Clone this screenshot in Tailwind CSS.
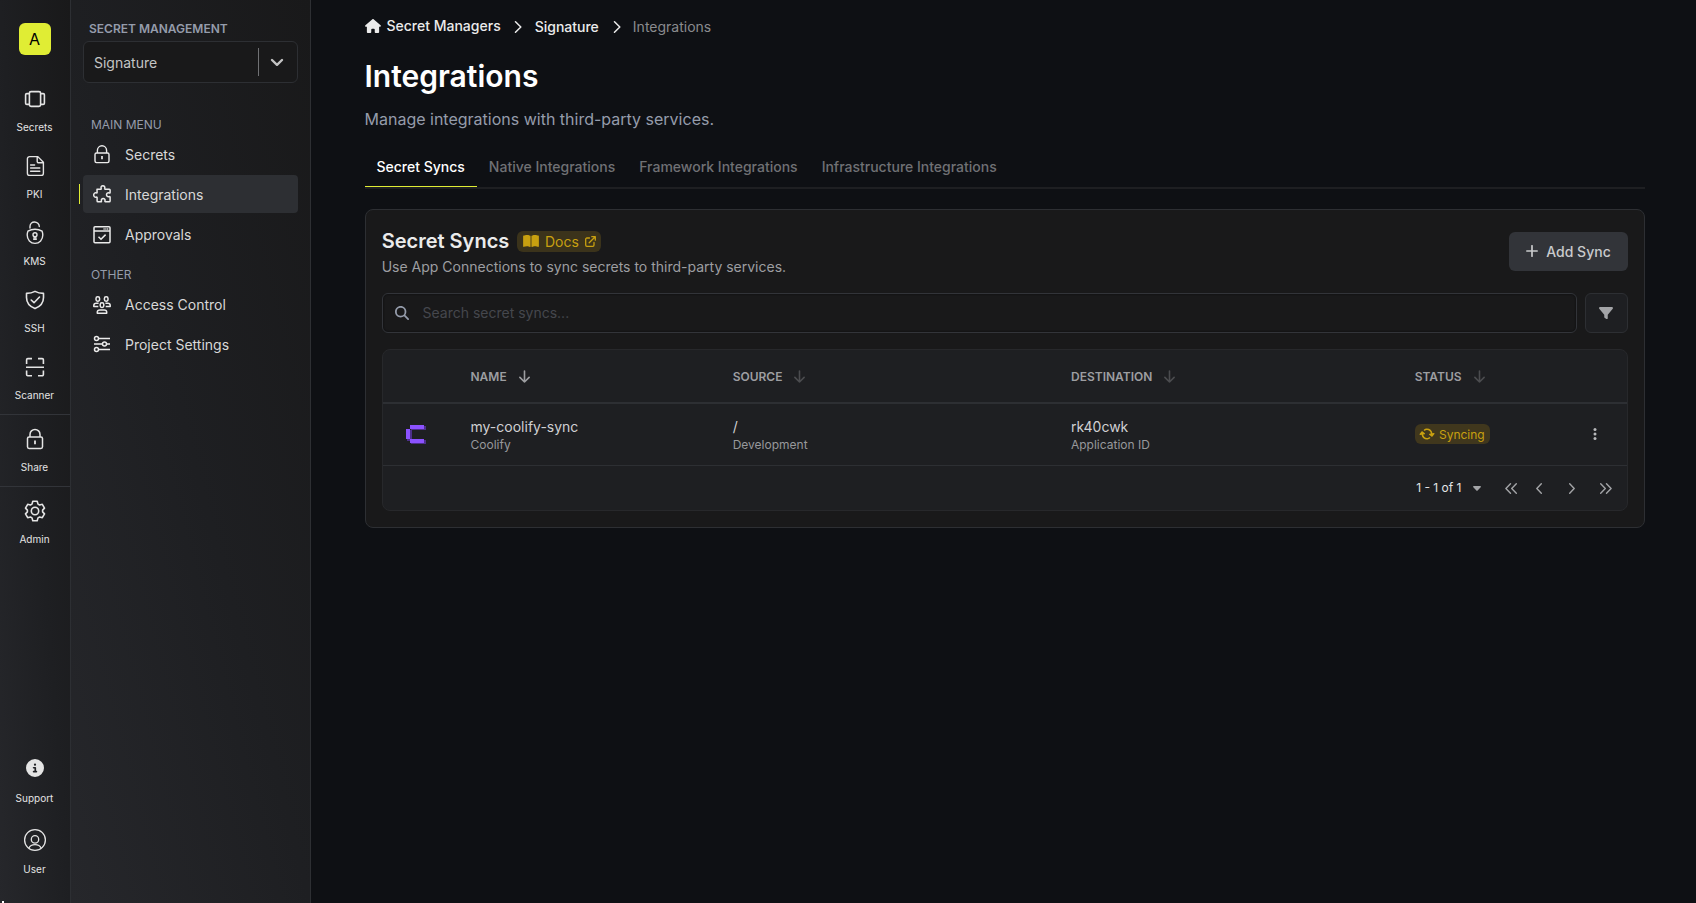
<!DOCTYPE html>
<html lang="en">
<head>
<meta charset="utf-8">
<title>Integrations</title>
<script src="https://cdn.jsdelivr.net/npm/@tailwindcss/browser@4"></script>
</head>
<body class="flex h-screen overflow-hidden bg-[#0e1014] font-['Inter',sans-serif] text-sm text-[#d8d8d8]">

<!-- Product rail -->
<aside class="relative flex h-full w-[71px] shrink-0 flex-col border-r border-[#2d2f33] bg-linear-to-tr from-[#26272b] via-[#1e1f22] to-[#19191a] text-center text-[10px] leading-[15px] text-[#e4e4e4]">
  <span class="absolute bottom-0 left-0.5 h-0.5 w-0.5 bg-white"></span>
  <div class="h-[79px] shrink-0 pt-[23px]">
    <div class="mx-auto flex size-8 items-center justify-center rounded-md bg-[#e0ed34] pr-px text-base text-black">A</div>
  </div>
  <div class="flex h-[67px] shrink-0 flex-col items-center gap-[9px] pt-2">
    <svg class="size-6" viewBox="0 0 24 24" fill="none" stroke="currentColor" stroke-width="1.600"><rect x="6.400" y="4.600" width="11.200" height="14.800" rx="1.600"/><path d="M6.400 6.600H3.800A1.200 1.200 0 0 0 2.600 7.800v8.400a1.200 1.200 0 0 0 1.200 1.200h2.600M17.600 6.600h2.600a1.200 1.200 0 0 1 1.200 1.200v8.400a1.200 1.200 0 0 1-1.200 1.200h-2.600"/></svg>
    <span class="pr-px">Secrets</span>
  </div>
  <div class="flex h-[67px] shrink-0 flex-col items-center gap-[9px] pt-2">
    <svg class="size-6" viewBox="0 0 24 24" fill="none" stroke="currentColor" stroke-width="1.400" stroke-linecap="round"><path d="M6.600 2.600h8.200l5.600 5.600v11a2.200 2.200 0 0 1-2.200 2.200H6.600a2.200 2.200 0 0 1-2.200-2.200V4.800a2.200 2.200 0 0 1 2.200-2.200zM14.200 2.800v4.600a1.400 1.400 0 0 0 1.400 1.400h4.600M7.600 11h4M7.600 14h9.200M7.600 17.200h9.200"/></svg>
    <span class="pr-px">PKI</span>
  </div>
  <div class="flex h-[67px] shrink-0 flex-col items-center gap-[9px] pt-2">
    <svg class="size-6" viewBox="0 0 24 24" fill="none" stroke="currentColor" stroke-width="1.400" stroke-linecap="round"><path d="M12 8.200c-2.600 0-5 .7-7.100 2-.5 1.300-.7 2.500-.7 3.900 0 4.600 3.200 8.300 7.800 8.300s7.800-3.700 7.800-8.300c0-1.400-.2-2.600-.7-3.900-2.100-1.300-4.500-2-7.100-2zM7 7V5.500C7 2.800 9 1 11.500 1S16.300 3 16.300 5.600"/><circle cx="12" cy="13.800" r="2"/><path d="M11.300 15.800l-.4 2.500h2.200l-.4-2.500"/></svg>
    <span class="pr-px">KMS</span>
  </div>
  <div class="flex h-[67px] shrink-0 flex-col items-center gap-[9px] pt-2">
    <svg class="size-6" viewBox="0 0 24 24" fill="none" stroke="currentColor" stroke-width="1.600" stroke-linejoin="round" stroke-linecap="round"><path d="M12 3.400c2.700 1.500 5.500 2 8.500 2v4.100c0 5.200-3 8.900-8.500 11.100-5.500-2.200-8.500-5.900-8.500-11.100V5.400c3 0 5.800-.5 8.500-2z"/><path d="M8.200 12l2.800 2.700 5.500-5.700"/></svg>
    <span class="pr-px">SSH</span>
  </div>
  <div class="flex h-[67px] shrink-0 flex-col items-center gap-[9px] pt-2">
    <svg class="size-6" viewBox="0 0 24 24" fill="none" stroke="currentColor" stroke-width="1.600"><path d="M3.600 9V4.800a1.200 1.200 0 0 1 1.200-1.200H9M15 3.600h4.200a1.200 1.200 0 0 1 1.200 1.200V9M20.400 15.400v4.200a1.200 1.200 0 0 1-1.200 1.200H15M9 20.800H4.800a1.200 1.200 0 0 1-1.200-1.200v-4.200M3 12.200h18"/></svg>
    <span class="pr-px">Scanner</span>
  </div>
  <div class="flex h-[72px] shrink-0 flex-col items-center gap-[9px] border-t border-[#323439] pt-3">
    <svg class="size-6" viewBox="0 0 24 24" fill="none" stroke="currentColor" stroke-width="1.500"><rect x="4.500" y="10" width="15" height="11.400" rx="1.600"/><path d="M7 10V7.400a5 5 0 0 1 10 0V10"/><path d="M12 13.600v3.600" stroke-width="1.800"/></svg>
    <span class="pr-px">Share</span>
  </div>
  <div class="flex h-[72px] shrink-0 flex-col items-center gap-[9px] border-t border-[#323439] pt-3">
    <svg class="size-6" viewBox="0 0 24 24" fill="none" stroke="currentColor" stroke-width="1.600" stroke-linejoin="round"><path d="M9.800 2.200h4.400l.8 2.900 1.600.9 2.700-.7 2.200 3.800-1.900 2v1.800l1.900 2-2.200 3.800-2.700-.7-1.600.9-.8 2.900H9.800L9 18.900l-1.600-.9-2.700.7-2.200-3.800 1.900-2v-1.800l-1.900-2 2.200-3.800 2.700.7L9 5.100z"/><circle cx="12" cy="12" r="3.700"/></svg>
    <span class="pr-px">Admin</span>
  </div>
  <div class="grow"></div>
  <div class="flex h-[72px] shrink-0 flex-col items-center gap-[14px] pt-[3px]">
    <svg class="size-[18px]" viewBox="0 0 512 512" fill="currentColor"><path d="M256 512A256 256 0 1 0 256 0a256 256 0 1 0 0 512zM216 336h24V272H216c-13.300 0-24-10.700-24-24s10.700-24 24-24h48c13.300 0 24 10.700 24 24v88h8c13.300 0 24 10.700 24 24s-10.700 24-24 24H216c-13.300 0-24-10.700-24-24s10.700-24 24-24zm40-208a32 32 0 1 1 0 64 32 32 0 1 1 0-64z"/></svg>
    <span class="pr-px">Support</span>
  </div>
  <div class="flex h-[75px] shrink-0 flex-col items-center gap-[10px]">
    <svg class="size-6" viewBox="0 0 24 24" fill="none" stroke="currentColor" stroke-width="1.300"><circle cx="12" cy="12" r="10.400"/><circle cx="12" cy="11.400" r="3.700"/><path d="M5.800 20.200c1-2.300 3.300-3.600 6.200-3.600s5.200 1.300 6.200 3.600"/></svg>
    <span class="pr-px">User</span>
  </div>
</aside>

<!-- Project sidebar -->
<nav class="flex h-full w-60 shrink-0 flex-col border-r border-[#2d2f33] bg-linear-to-tr from-[#26272b] via-[#1e1f22] to-[#19191a] pr-3 pl-3">
  <div class="mt-5 pl-1.5 text-xs leading-[18px] font-semibold text-[#959cab]">SECRET MANAGEMENT</div>
  <div class="mt-[3px] flex h-[42px] shrink-0 items-center rounded-md border border-[#2d2f33] bg-[#19191a] pl-2.5 text-[#c4c4c4]">
    <span class="grow pt-px">Signature</span>
    <span class="h-7 w-px bg-[#707174]"></span>
    <svg class="mr-[13px] ml-[11px] h-3.5 w-3.5" viewBox="0 0 14 14" fill="none" stroke="currentColor" stroke-width="2.400" stroke-linecap="round" stroke-linejoin="round"><path d="M2 5l5 4.800L12 5"/></svg>
  </div>
  <div class="mt-8 pl-2 text-xs leading-5 text-[#959cab]">MAIN MENU</div>
  <div class="flex h-10 items-center gap-3.5 pl-2.5">
    <svg class="size-[18px] overflow-visible" viewBox="0 0 18 18" fill="none" stroke="#ebebeb" stroke-width="1.400"><rect x="2" y="7" width="14" height="9.600" rx="1.500"/><path d="M4.400 7V4.400a4.600 4.600 0 0 1 9.200 0V7"/><path d="M9 10v3.200" stroke-width="1.700"/></svg>
    <span>Secrets</span>
  </div>
  <div class="relative flex h-[38px] items-center gap-3.5 rounded bg-[#2d2f33] pl-2.5">
    <span class="absolute top-[9px] -left-1 h-5 w-px bg-[#e0ed34]"></span>
    <svg class="size-[18px] overflow-visible" viewBox="0 0 18 18" fill="none" stroke="#ebebeb" stroke-width="1.500" stroke-linejoin="round"><path d="M4 4.200h3.800c.5 0 .6-.5.4-.9C7.600 1.800 8.500.8 9.900.8s2.300 1 1.800 2.500c-.2.500 0 .9.500.9h4.100c.5 0 .8.300.8.800v2.500c0 .5-.4.700-.9.500-1.500-.5-2.700.4-2.700 1.800s1.200 2.300 2.700 1.800c.5-.2.900 0 .9.500v3.800c0 .6-.3.900-.9.900h-3.800c-.5 0-.6-.4-.4-.9.400-1.300-.5-2.300-1.800-2.300s-2.200 1-1.800 2.300c.2.500 0 .9-.5.900H5c-.6 0-.9-.3-.9-.9v-3.300c0-.5-.4-.7-.8-.5C1.800 12.500.7 11.500.7 10s1.200-2.500 2.600-2.100c.5.200.8 0 .8-.5z"/></svg>
    <span class="pt-0.5">Integrations</span>
  </div>
  <div class="mt-0.5 flex h-10 items-center gap-3.5 pl-2.5">
    <svg class="size-[18px]" viewBox="0 0 18 18" fill="none" stroke="#ebebeb" stroke-width="1.500"><rect x="1" y=".8" width="16" height="16" rx="1"/><path d="M1 5h16M5.500 10.800l2.500 2.400 4.600-4.600"/><path d="M10.500 2.900h4.800" stroke-dasharray="1.200 .6"/></svg>
    <span>Approvals</span>
  </div>
  <div class="mt-2.5 pl-2 text-xs leading-5 text-[#959cab]">OTHER</div>
  <div class="flex h-10 items-center gap-3.5 pl-2.5">
    <svg class="-mt-px size-[18px]" viewBox="0 0 18 18" fill="none" stroke="#ebebeb" stroke-width="1.500" stroke-linejoin="round"><rect x="3" y=".8" width="3.600" height="4.400" rx="1.700"/><rect x="11.400" y=".8" width="3.600" height="4.400" rx="1.700"/><rect x="7.200" y="6.800" width="3.600" height="4.600" rx="1.700"/><path d="M5.300 10.400H.8v-1c0-1.300 1.200-2.200 2.500-2.200h2.300M12.700 10.400h4.500v-1c0-1.300-1.200-2.200-2.500-2.200h-2.300M4.300 17.200v-1.100c0-1.300 1.200-2.200 2.600-2.200h4.200c1.400 0 2.600.9 2.600 2.200v1.100z"/></svg>
    <span>Access Control</span>
  </div>
  <div class="flex h-10 items-center gap-3.5 pl-2.5">
    <svg class="-mt-0.5 size-[18px]" viewBox="0 0 18 18" fill="none" stroke="#ebebeb" stroke-width="1.500"><circle cx="3.500" cy="3.500" r="2"/><path d="M5.500 3.500H17M1 9h8.500M13.500 9H17M5.500 14.500H17"/><circle cx="11.500" cy="9" r="2"/><circle cx="3.500" cy="14.500" r="2"/></svg>
    <span>Project Settings</span>
  </div>
</nav>

<!-- Page content -->
<main class="flex grow flex-col pl-[54px]">
  <div class="w-[1280px]">
    <div class="flex h-[54px] items-center font-medium text-[#ebebeb]">
      <svg class="-mt-0.5 h-3.5 w-4" viewBox="0 0 576 512" fill="currentColor"><path d="M575.800 255.500c0 18-15 32.100-32 32.100h-32l.7 160.200c0 2.700-.2 5.400-.5 8.100V472c0 22.100-17.900 40-40 40H392c-22.100 0-40-17.900-40-40v-88c0-17.700-14.300-32-32-32h-64c-17.700 0-32 14.300-32 32v88c0 22.100-17.900 40-40 40h-80c-22.100 0-40-17.900-40-40V287.600H32c-18 0-32-14-32-32.100 0-9 3-17 10-24L266.400 8c7-7 15-8 22-8s15 2 21 7l255.400 224.500c8 7 12 15 11 24z"/></svg>
      <span class="-mt-0.5 ml-[5.500px]">Secret Managers</span>
      <svg class="mr-[13px] ml-[13px] h-3 w-2" viewBox="0 0 8 12" fill="none" stroke="currentColor" stroke-width="1.500" stroke-linecap="round" stroke-linejoin="round"><path d="M1.500 .8L6.800 6l-5.300 5.200"/></svg>
      <span>Signature</span>
      <svg class="mr-3 ml-[14px] h-3 w-2" viewBox="0 0 8 12" fill="none" stroke="currentColor" stroke-width="1.500" stroke-linecap="round" stroke-linejoin="round"><path d="M1.500 .8L6.800 6l-5.300 5.200"/></svg>
      <span class="font-normal text-[#8a8b8e]">Integrations</span>
    </div>
    <h1 class="mt-1 -ml-[0.5px] text-3xl leading-9 font-semibold text-white">Integrations</h1>
    <p class="mt-[13px] -ml-[0.5px] text-base leading-6 text-[#959cab]">Manage integrations with third-party services.</p>

    <div class="mt-4 flex h-[42px] border-b-2 border-[#1e1f22] font-medium text-[#707174]">
      <div class="flex h-10 items-center border-b border-[#e0ed34] pr-[12.500px] pl-[11.500px] text-white">Secret Syncs</div>
      <div class="flex h-10 items-center pr-[12.500px] pl-[11.500px] pb-px">Native Integrations</div>
      <div class="flex h-10 items-center pr-[12.500px] pl-[11.500px] pb-px">Framework Integrations</div>
      <div class="flex h-10 items-center pr-[12.500px] pl-[11.500px] pb-px">Infrastructure Integrations</div>
    </div>

    <section class="mt-5 h-[319px] rounded-lg border border-[#2d2f33] bg-[#19191a] px-4">
      <div class="flex h-[83px] items-start justify-between">
        <div class="-ml-[0.3px] pt-[17px]">
          <div class="flex h-7 items-center">
            <h2 class="text-xl font-semibold text-[#ebebeb]">Secret Syncs</h2>
            <div class="ml-2 flex h-[21px] items-center rounded-md bg-[#3b331b] pr-[5.500px] pl-1.5 text-[#c8a010]">
              <svg class="-mt-px h-3.5 w-4" viewBox="0 0 576 512" fill="currentColor"><path d="M249.600 471.500c10.800 3.800 22.400-4.100 22.400-15.500V78.600c0-4.200-1.600-8.400-5-11C247.400 52 202.400 32 144 32 93.500 32 46.300 45.300 18.100 56.100 6.800 60.500 0 71.700 0 83.800v370.300c0 11.900 12.800 20.200 24.100 16.500C55.600 460.100 105.500 448 144 448c33.900 0 79 14 105.600 23.500zm76.800 0C353 462 398.100 448 432 448c38.500 0 88.400 12.100 119.900 22.600 11.300 3.800 24.100-4.600 24.100-16.500V83.800c0-12.100-6.800-23.300-18.100-27.600C529.700 45.300 482.500 32 432 32c-58.400 0-103.400 20-123 35.600-3.300 2.600-5 6.800-5 11V456c0 11.400 11.700 19.300 22.400 15.500z"/></svg>
              <span class="ml-[5.700px] pt-px">Docs</span>
              <svg class="ml-1.5 h-[11px] w-[11px]" viewBox="0 0 11 11" fill="none" stroke="currentColor" stroke-width="1.300" stroke-linecap="round" stroke-linejoin="round"><path d="M4.500 2H1.900A1.200 1.200 0 0 0 .7 3.200v5.900a1.200 1.200 0 0 0 1.200 1.200h5.900A1.200 1.200 0 0 0 9 9.100V6.500M6.800.7h3.500v3.500M10.200.8L4.200 6.800"/></svg>
            </div>
          </div>
          <p class="mt-0.5 leading-5 text-[#9d9ea1]">Use App Connections to sync secrets to third-party services.</p>
        </div>
        <button class="mt-[22px] flex h-[39px] w-[119px] items-center justify-center gap-2 rounded-md bg-[#323439] font-medium text-[#c9cacc]">
          <svg class="-mt-px size-3" viewBox="0 0 12 12" fill="none" stroke="currentColor" stroke-width="1.700" stroke-linecap="round"><path d="M6 .8v10.400M.8 6h10.400"/></svg>
          <span>Add Sync</span>
        </button>
      </div>

      <div class="flex h-10 gap-2">
        <div class="flex grow items-center rounded-md border border-[#323439] bg-[#19191a] pl-3 text-[#45474d] shadow-[inset_0_0_2px_#08090b]">
          <svg class="size-3.5" viewBox="0 0 512 512" fill="#959cab"><path d="M416 208c0 45.900-14.900 88.300-40 122.700L502.600 457.400c12.500 12.500 12.500 32.800 0 45.300s-32.800 12.500-45.300 0L330.700 376c-34.400 25.200-76.800 40-122.700 40C93.100 416 0 322.900 0 208S93.100 0 208 0s208 93.100 208 208zM208 352a144 144 0 1 0 0-288 144 144 0 1 0 0 288z"/></svg>
          <span class="ml-[13.500px]">Search secret syncs...</span>
        </div>
        <div class="flex w-[43px] items-center justify-center rounded-md border border-[#2d2f33] bg-[#1e1f22] pr-px">
          <svg class="size-3.5" viewBox="0 0 512 512" fill="#a3a4a7"><path d="M3.900 54.900C10.500 40.900 24.500 32 40 32h432c15.500 0 29.500 8.900 36.100 22.900s4.600 30.500-5.200 42.500L320 320.900V448c0 12.100-6.800 23.200-17.700 28.600s-23.800 4.300-33.500-3l-64-48c-8.100-6-12.800-15.500-12.800-25.600V320.900L9 97.300C-.7 85.400-2.800 68.800 3.900 54.900z"/></svg>
        </div>
      </div>

      <div class="mt-4 h-[162px] rounded-lg border border-[#27282b] bg-[#1e1f22]">
        <div class="grid h-[54px] grid-cols-[87.500px_262.200px_338.300px_343.700px_1fr] items-center border-b-2 border-[#2d2f33] pt-px text-xs font-semibold text-[#9d9ea1]">
          <span></span>
          <div class="flex items-center gap-3">NAME<svg class="h-[13px] w-[11px]" viewBox="0 0 11 13" fill="none" stroke="currentColor" stroke-width="1.600" stroke-linecap="round" stroke-linejoin="round"><path d="M5.500 1v11M.9 7.400L5.500 12l4.600-4.600"/></svg></div>
          <div class="flex items-center gap-3">SOURCE<svg class="h-[13px] w-[11px]" viewBox="0 0 11 13" fill="none" stroke="#4b4c4f" stroke-width="1.600" stroke-linecap="round" stroke-linejoin="round"><path d="M5.500 1v11M.9 7.400L5.500 12l4.600-4.600"/></svg></div>
          <div class="flex items-center gap-3">DESTINATION<svg class="h-[13px] w-[11px]" viewBox="0 0 11 13" fill="none" stroke="#4b4c4f" stroke-width="1.600" stroke-linecap="round" stroke-linejoin="round"><path d="M5.500 1v11M.9 7.400L5.500 12l4.600-4.600"/></svg></div>
          <div class="flex items-center gap-3">STATUS<svg class="h-[13px] w-[11px]" viewBox="0 0 11 13" fill="none" stroke="#4b4c4f" stroke-width="1.600" stroke-linecap="round" stroke-linejoin="round"><path d="M5.500 1v11M.9 7.400L5.500 12l4.600-4.600"/></svg></div>
        </div>
        <div class="grid h-[62px] grid-cols-[87.500px_262.200px_338.300px_179px_165px_1fr] items-center border-b border-[#2d2f33] text-[#d0d0d2]">
          <svg class="ml-[23px] h-5 w-5" viewBox="0 0 20 20" shape-rendering="crispEdges"><path fill="#4d2f8c" d="M5 1h15v4H5zM1 5h5v11H1zM5 15h15v4H5z"/><path fill="#8c52ff" d="M4 0h14v4H4zM0 4h4v10H0zM4 14h14v4H4z"/></svg>
          <div class="pt-0.5"><div class="h-[18px] leading-[18px]">my-coolify-sync</div><div class="h-[18px] text-xs leading-[18px] text-[#97989b]">Coolify</div></div>
          <div class="pt-0.5"><div class="h-[18px] leading-[18px]">/</div><div class="h-[18px] text-xs leading-[18px] text-[#97989b]">Development</div></div>
          <div class="col-span-2 pt-0.5"><div class="h-[18px] leading-[18px]">rk40cwk</div><div class="h-[18px] text-xs leading-[18px] text-[#97989b]">Application ID</div></div>
          <div class="flex items-center justify-between pr-[30.500px] pb-px">
            <div class="flex h-5 items-center gap-[5px] rounded-md bg-[#40371d] px-[5px] text-xs text-[#c8a010]">
              <svg class="size-3.5 rotate-[38deg]" viewBox="-30 -30 572 572" fill="currentColor"><path d="M142.900 142.900c62.200-62.200 162.700-62.500 225.300-1L327 183c-6.900 6.900-8.900 17.200-5.200 26.200s12.500 14.800 22.200 14.800H472c13.300 0 24-10.700 24-24V72c0-9.700-5.800-18.500-14.800-22.200s-19.300-1.700-26.200 5.200L413.400 96.600c-87.600-86.500-228.700-86.200-315.800 1C73.200 122 55.600 150.700 44.800 181.400c-5.900 16.700 2.900 34.900 19.500 40.800s34.900-2.900 40.800-19.500c7.700-21.800 20.200-42.300 37.800-59.800zM16 312v128c0 9.700 5.800 18.500 14.800 22.200s19.300 1.700 26.200-5.200l41.600-41.600c87.600 86.500 228.700 86.200 315.800-1 24.400-24.400 42.100-53.100 52.900-83.700 5.900-16.700-2.900-34.900-19.500-40.800s-34.900 2.900-40.800 19.500c-7.700 21.800-20.200 42.300-37.800 59.800-62.200 62.200-162.700 62.500-225.300 1L185 329c6.900-6.900 8.900-17.200 5.200-26.200s-12.500-14.800-22.200-14.800H40c-13.300 0-24 10.700-24 24z"/></svg>
              <span class="pt-px">Syncing</span>
            </div>
            <svg class="h-3 w-1" viewBox="0 0 4 12" fill="#b8b9bb"><circle cx="2" cy="1.600" r="1.500"/><circle cx="2" cy="6" r="1.500"/><circle cx="2" cy="10.400" r="1.500"/></svg>
          </div>
        </div>
        <div class="flex h-[44px] items-center justify-end pr-[15px] text-xs text-[#e4e4e6]">
          <span>1 - 1 of 1</span>
          <svg class="ml-[11.500px] h-[5px] w-2" viewBox="0 0 8 5" fill="#a3a4a7"><path d="M.8 0h6.400c.7 0 1 .8.500 1.300L4.600 4.600a.8.800 0 0 1-1.200 0L.3 1.300C-.2.800.1 0 .8 0z"/></svg>
          <svg class="ml-6 h-[11px] w-3" viewBox="0 0 12 11" fill="none" stroke="#a3a4a7" stroke-width="1.400" stroke-linecap="round" stroke-linejoin="round"><path d="M5.500 .8L.9 5.500l4.600 4.700M11.300 .8L6.700 5.500l4.600 4.700"/></svg>
          <svg class="ml-[19px] h-[11px] w-1.5" viewBox="0 0 6 11" fill="none" stroke="#a3a4a7" stroke-width="1.400" stroke-linecap="round" stroke-linejoin="round"><path d="M5.300 .8L.8 5.500l4.500 4.700"/></svg>
          <svg class="ml-[27px] h-[11px] w-1.5" viewBox="0 0 6 11" fill="none" stroke="#a3a4a7" stroke-width="1.400" stroke-linecap="round" stroke-linejoin="round"><path d="M.7 .8l4.500 4.700-4.500 4.700"/></svg>
          <svg class="ml-[25px] h-[11px] w-3" viewBox="0 0 12 11" fill="none" stroke="#a3a4a7" stroke-width="1.400" stroke-linecap="round" stroke-linejoin="round"><path d="M.7 .8l4.600 4.700-4.600 4.700M6.500 .8l4.600 4.700-4.600 4.700"/></svg>
        </div>
      </div>
    </section>
  </div>
</main>
</body>
</html>
